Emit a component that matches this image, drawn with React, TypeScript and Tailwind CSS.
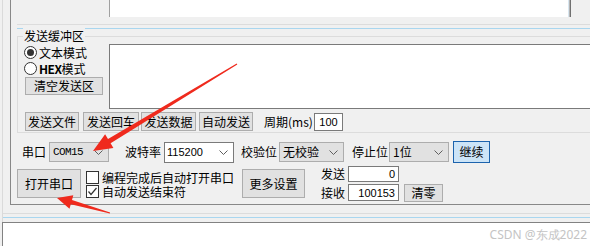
import React from "react";

const Chevron = () => (
  <svg width="9" height="5" viewBox="0 0 9 5" className="shrink-0">
    <polyline points="0.5,0.5 4.5,4.5 8.5,0.5" fill="none" stroke="#5f5f5f" strokeWidth="1" />
  </svg>
);

const Btn = ({ children, className = "" }: { children: React.ReactNode; className?: string }) => (
  <div className={`flex shrink-0 items-center justify-center border border-[#adadad] bg-[#e1e1e1] ${className}`}>
    {children}
  </div>
);

const Combo = ({ children, className = "" }: { children: React.ReactNode; className?: string }) => (
  <div className={`flex shrink-0 items-center justify-between pr-[5px] border ${className}`}>
    {children}
    <Chevron />
  </div>
);

const Radio = ({ on }: { on?: boolean }) => (
  <div className="flex h-[13px] w-[13px] shrink-0 items-center justify-center rounded-full border border-[#333] bg-white">
    {on && <div className="h-[7px] w-[7px] rounded-full bg-[#333]" />}
  </div>
);

const Check = ({ on }: { on?: boolean }) => (
  <div className="h-[13px] w-[13px] shrink-0 border border-[#333] bg-white">
    {on && (
      <svg width="11" height="11" viewBox="0 0 11 11">
        <polyline points="1.5,5.5 4,8.5 9.5,2" fill="none" stroke="#333" strokeWidth="1.2" />
      </svg>
    )}
  </div>
);

function arrow(tx: number, ty: number, px: number, py: number, headL: number, headW: number, w1: number, w0: number) {
  const dx = px - tx;
  const dy = py - ty;
  const len = Math.hypot(dx, dy);
  const ux = dx / len;
  const uy = dy / len;
  const nx = -uy;
  const ny = ux;
  const bx = px - ux * headL;
  const by = py - uy * headL;
  const pts = [
    [tx + nx * w0, ty + ny * w0],
    [bx + nx * w1, by + ny * w1],
    [bx + nx * headW, by + ny * headW],
    [px, py],
    [bx - nx * headW, by - ny * headW],
    [bx - nx * w1, by - ny * w1],
    [tx - nx * w0, ty - ny * w0],
  ];
  return pts.map((p) => p.map((v) => v.toFixed(1)).join(",")).join(" ");
}

export default function App() {
  return (
    <div className="relative flex h-[246px] w-[590px] flex-col overflow-hidden bg-[#f0f0f0] font-['Noto_Sans_CJK_SC',sans-serif] text-[12px] leading-[14px] text-black">
      {/* main panel */}
      <div className="ml-[2px] flex h-[205px] shrink-0 border-l border-[#dadada]">
        <div className="ml-[7px] flex flex-1 flex-col border-b border-l border-[#888]">
          {/* receive area (cut off) */}
          <div className="flex h-[17px] shrink-0">
            <div className="w-[98px]" />
            <div className="w-[459px] border-l border-[#a0a0a0] bg-white" />
            <div className="w-px bg-[#d8e6f0]" />
            <div className="w-px bg-[#b4b4b4]" />
            <div className="w-px bg-[#707070]" />
          </div>
          <div className="ml-[6px] mt-[7px] h-px bg-[#dcdcdc]" />
          <div className="ml-[6px] mt-[3px] h-px bg-[#a9d6ef]" />

          {/* send buffer group */}
          <div className="relative ml-[6px] mt-[7px] flex h-[97px] shrink-0 flex-col border-b border-l border-t border-[#dcdcdc]">
            <span className="absolute -top-[9px] left-[5px] bg-[#f0f0f0] px-px leading-[16px]">发送缓冲区</span>
            <div className="flex h-[72px]">
              <div className="flex w-[91px] flex-col pl-[6px]">
                <div className="mt-[9px] flex h-[13px] items-center gap-[2px]">
                  <Radio on />
                  <span className="leading-[13px]">文本模式</span>
                </div>
                <div className="mt-[3px] flex h-[13px] items-center gap-[2px]">
                  <Radio />
                  <span className="leading-[13px]">
                    <span className="font-bold tracking-[-0.5px]">HEX</span>模式
                  </span>
                </div>
                <Btn className="ml-px mt-[2px] h-[18px] w-[78px]">清空发送区</Btn>
              </div>
              <div className="mt-[7px] flex-1 border-b border-l border-t border-[#7a7a7a] bg-white" />
            </div>
            <div className="mt-[3px] flex h-[19px] items-center pl-[7px]">
              <Btn className="h-[19px] w-[54px]">发送文件</Btn>
              <Btn className="ml-[4px] h-[19px] w-[56px]">发送回车</Btn>
              <Btn className="ml-[2px] h-[19px] w-[55px]">发送数据</Btn>
              <Btn className="ml-[3px] h-[19px] w-[54px]">自动发送</Btn>
              <span className="ml-[11px] w-[50px]">周期(ms)</span>
              <div className="flex h-[18px] w-[29px] items-center justify-center border border-[#7a7a7a] bg-white font-['Liberation_Sans',sans-serif] text-[11px]">
                100
              </div>
            </div>
          </div>

          {/* port settings row */}
          <div className="mt-[8px] flex h-[22px] shrink-0 items-center">
            <span className="ml-[11px] w-[27px]">串口</span>
            <Combo className="h-[20px] w-[60px] border-[#adadad] bg-[#e1e1e1] pl-[3px]">
              <span className="font-['Liberation_Mono',monospace] text-[11px] tracking-[-0.6px]">COM15</span>
            </Combo>
            <span className="ml-[16px] w-[39px]">波特率</span>
            <Combo className="h-[21px] w-[70px] border-[#7a7a7a] bg-white pl-[2px]">
              <span className="font-['Liberation_Sans',sans-serif] text-[11px]">115200</span>
            </Combo>
            <span className="ml-[7px] w-[38px]">校验位</span>
            <Combo className="h-[20px] w-[65px] border-[#adadad] bg-[#e1e1e1] pl-[3px]">
              <span>无校验</span>
            </Combo>
            <span className="ml-[8px] w-[37px]">停止位</span>
            <Combo className="h-[20px] w-[60px] border-[#adadad] bg-[#e1e1e1] pl-[3px]">
              <span>1位</span>
            </Combo>
            <div className="ml-[4px] flex h-[22px] w-[37px] items-center justify-center border border-[#1c63ad] bg-[#cce4f7]">
              继续
            </div>
          </div>

          {/* open row */}
          <div className="mt-[3px] flex h-[36px] shrink-0 items-start">
            <Btn className="ml-[6px] mt-[3px] h-[29px] w-[64px]">打开串口</Btn>
            <div className="ml-[5px] mt-[5px] flex w-[151px] flex-col">
              <div className="flex h-[13px] items-center">
                <Check />
                <span className="ml-[3px] leading-[13px]">编程完成后自动打开串口</span>
              </div>
              <div className="mt-px flex h-[13px] items-center">
                <Check on />
                <span className="ml-[3px] leading-[13px]">自动发送结束符</span>
              </div>
            </div>
            <Btn className="ml-[5px] mt-[3px] h-[29px] w-[63px]">更多设置</Btn>
            <div className="ml-[16px] flex flex-col">
              <div className="flex h-[16px] items-center">
                <span className="w-[27px]">发送</span>
                <div className="flex h-[16px] w-[51px] items-center justify-end border border-[#7a7a7a] bg-white pr-[3px] font-['Liberation_Sans',sans-serif] text-[11px]">
                  0
                </div>
              </div>
              <div className="mt-[2px] flex h-[17px] items-center">
                <span className="w-[27px]">接收</span>
                <div className="flex h-[17px] w-[51px] items-center justify-end border border-[#7a7a7a] bg-white pr-[3px] font-['Liberation_Sans',sans-serif] text-[11px]">
                  100153
                </div>
              </div>
            </div>
            <Btn className="ml-[5px] mt-[18px] h-[18px] w-[39px]">清零</Btn>
          </div>
        </div>
      </div>

      {/* lower receive pane */}
      <div className="ml-[2px] flex flex-1 flex-col">
        <div className="flex h-[17px] shrink-0 flex-col border-l border-[#dadada]">
          <div className="mt-[8px] h-px bg-[#dcdcdc]" />
          <div className="mt-[3px] h-px bg-[#a9d6ef]" />
        </div>
        <div className="flex-1 border-l border-t border-[#828282] bg-white" />
      </div>

      {/* annotation arrows */}
      <svg className="pointer-events-none absolute left-0 top-0" width="590" height="246">
        <polygon points={arrow(237, 64, 93, 151, 19, 8, 2.5, 0.5)} fill="#ef2a1d" />
        <polygon points={arrow(110, 213, 57, 198, 15, 7, 2.2, 0.5)} fill="#ef2a1d" />
      </svg>

      <span className="absolute bottom-[4px] right-[3px] font-['Noto_Sans',sans-serif] text-[12px] leading-[14px] text-[#c4c4c4]">
        CSDN @东成2022
      </span>
    </div>
  );
}
